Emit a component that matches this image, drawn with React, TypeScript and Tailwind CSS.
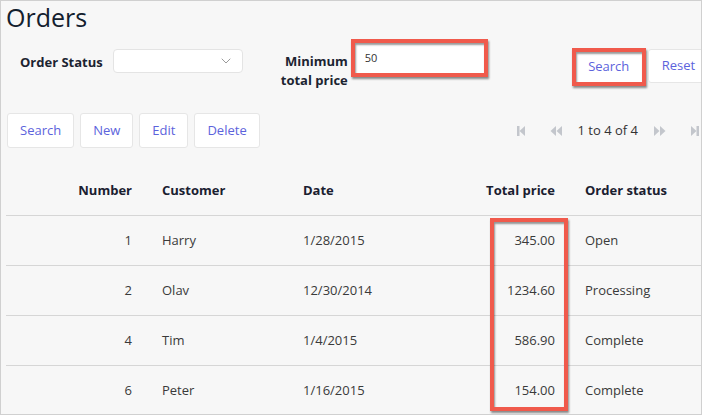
import { ChevronDown } from 'lucide-react'

const rows = [
  { number: '1', customer: 'Harry', date: '1/28/2015', total: '345.00', status: 'Open' },
  { number: '2', customer: 'Olav', date: '12/30/2014', total: '1234.60', status: 'Processing' },
  { number: '4', customer: 'Tim', date: '1/4/2015', total: '586.90', status: 'Complete' },
  { number: '6', customer: 'Peter', date: '1/16/2015', total: '154.00', status: 'Complete' },
]

// red callout frame used by the screenshot annotations
const callout =
  'border-4 border-[#f05a4c] shadow-[1px_2px_2px_rgba(0,0,0,0.45),inset_1px_2px_2px_rgba(0,0,0,0.4)]'

function PagerIcon({ kind }: { kind: 'first' | 'prev' | 'next' | 'last' }) {
  return (
    <svg
      width={kind === 'last' ? 11 : 14}
      height="12"
      viewBox={kind === 'last' ? '0 0 11 12' : '0 0 14 12'}
      className="fill-[#c3c6cc] block"
    >
      {kind === 'first' && (
        <>
          <rect x="2" y="1" width="2.5" height="10" />
          <polygon points="10,1 4.5,6 10,11" />
        </>
      )}
      {kind === 'prev' && (
        <>
          <polygon points="7,1 1.5,6 7,11" />
          <polygon points="13,1 7.5,6 13,11" />
        </>
      )}
      {kind === 'next' && (
        <>
          <polygon points="1,1 6.5,6 1,11" />
          <polygon points="7,1 12.5,6 7,11" />
        </>
      )}
      {kind === 'last' && (
        <>
          <polygon points="2,1 7.5,6 2,11" />
          <rect x="7.5" y="1" width="2.5" height="10" />
        </>
      )}
    </svg>
  )
}

function ToolButton({ label }: { label: string }) {
  return (
    <button className="h-[35px] px-[12px] bg-white border border-[#e6e6e6] rounded-[3px] text-[13px] text-[#5c63dc]">
      {label}
    </button>
  )
}

export default function App() {
  return (
    <div
      className="w-[702px] h-[415px] overflow-hidden bg-[#f7f7f7] border border-[#d0d0d0] pl-[5px] text-[#1c2431]"
      style={{ fontFamily: '"Open Sans", "Liberation Sans", sans-serif' }}
    >
      <h1 className="text-[25px] leading-[30px] text-[#13202e] mt-[1px]">Orders</h1>

      {/* filters */}
      <div className="flex items-start mt-[7px] h-[50px] whitespace-nowrap">
        <span className="shrink-0 ml-[14px] mt-[14px] text-[13px] leading-[18px] font-bold">Order Status</span>
        <div className="shrink-0 ml-[10px] mt-[10px] w-[130px] h-[24px] bg-white border border-[#e4e4e4] rounded-[4px] flex items-center justify-end pr-[8px]">
          <ChevronDown size={16} strokeWidth={1.3} className="text-[#8a8a8a]" />
        </div>
        <span className="shrink-0 ml-[38px] mt-[13px] w-[67px] text-right text-[13px] leading-[19px] font-bold">
          Minimum
          <br />
          total price
        </span>
        <div className={`shrink-0 ml-[3px] w-[137px] h-[38px] bg-white ${callout} flex items-center pl-[10px]`}>
          <span className="text-[11px] text-[#333]">50</span>
        </div>
        <button
          className={`shrink-0 ml-[84px] mt-[9px] w-[74px] h-[38px] bg-white ${callout} text-[13px] text-[#5c63dc]`}
        >
          Search
        </button>
        <button className="shrink-0 ml-[2px] mt-[10px] h-[34px] px-[13px] bg-white border border-[#e6e6e6] rounded-[3px] text-[13px] text-[#5c63dc]">
          Reset
        </button>
      </div>

      {/* toolbar + pager */}
      <div className="flex items-center mt-[24px] pl-[1px]">
        <div className="flex gap-[6px]">
          <ToolButton label="Search" />
          <ToolButton label="New" />
          <ToolButton label="Edit" />
          <ToolButton label="Delete" />
        </div>
        <div className="ml-auto mr-[1px] flex items-center text-[13px] text-[#333] whitespace-nowrap">
          <PagerIcon kind="first" />
          <span className="ml-[20px]"><PagerIcon kind="prev" /></span>
          <span className="ml-[15px]">1 to 4 of 4</span>
          <span className="ml-[15px]"><PagerIcon kind="next" /></span>
          <span className="ml-[22px]"><PagerIcon kind="last" /></span>
        </div>
      </div>

      {/* grid */}
      <div className="relative mt-[18px] text-[13px]">
        <div className="flex items-center h-[50px] border-b border-[#d6d6d6] font-bold text-[#1a2030]">
          <div className="w-[141px] px-[15px] text-right">Number</div>
          <div className="w-[141px] px-[15px]">Customer</div>
          <div className="w-[113px] px-[15px]">Date</div>
          <div className="w-[169px] px-[15px] text-right">Total price</div>
          <div className="flex-1 px-[15px]">Order status</div>
        </div>
        {rows.map((r, i) => (
          <div
            key={r.number}
            className={`flex items-center h-[50px] text-[#3a3a3a] ${i < rows.length - 1 ? 'border-b border-[#d6d6d6]' : ''}`}
          >
            <div className="w-[141px] px-[15px] text-right">{r.number}</div>
            <div className="w-[141px] px-[15px]">{r.customer}</div>
            <div className="w-[113px] px-[15px]">{r.date}</div>
            <div className="w-[169px] px-[15px] text-right">{r.total}</div>
            <div className="flex-1 px-[15px]">{r.status}</div>
          </div>
        ))}
        <div className={`absolute left-[484px] top-[52px] w-[78px] h-[193px] ${callout}`} />
      </div>
    </div>
  )
}
